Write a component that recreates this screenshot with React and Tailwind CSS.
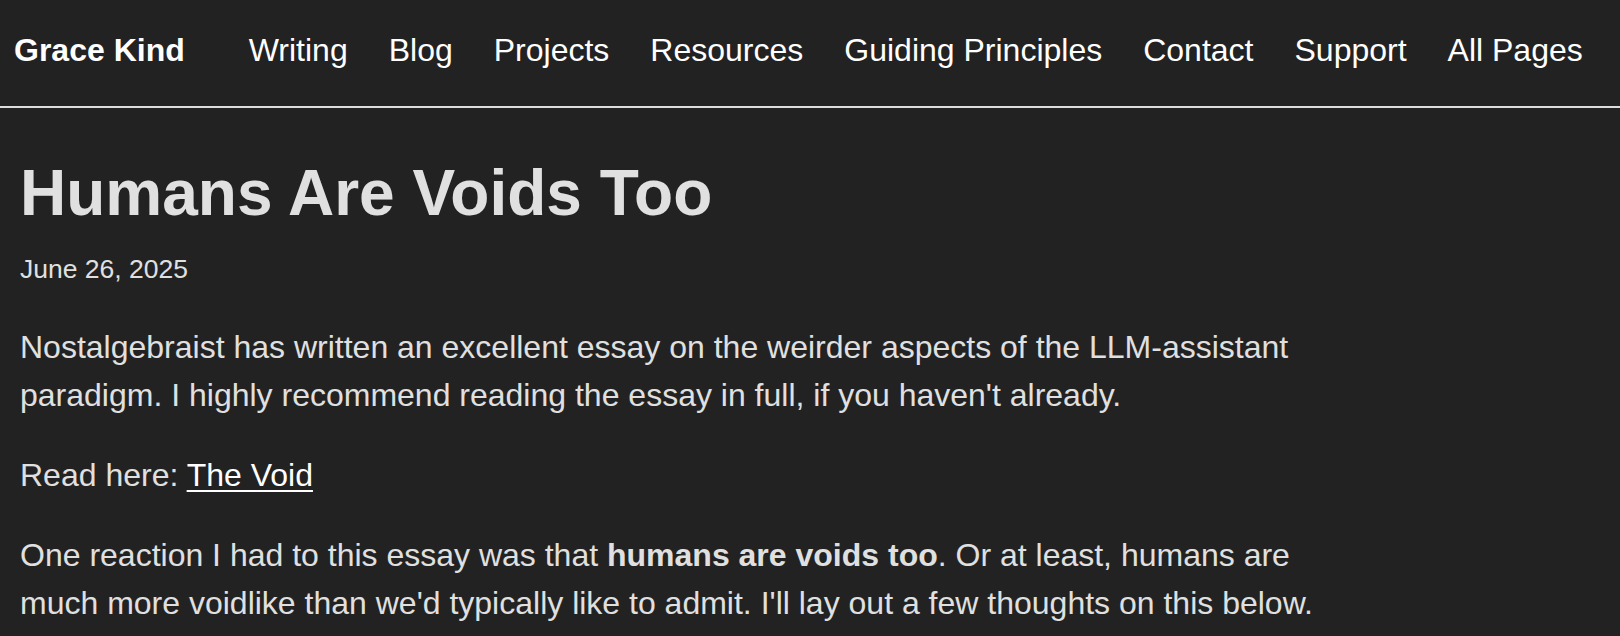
import React from 'react';

const navLinks = ['Writing', 'Blog', 'Projects', 'Resources', 'Guiding Principles', 'Contact', 'Support', 'All Pages'];

const App = () => {
  return (
    <div className="min-h-screen bg-[#222222] text-[#e0e0e0] font-['Liberation_Sans',Arial,sans-serif]">
      <nav className="flex items-center pl-[14px] pt-[26px] pb-[32px] border-b-2 border-[#dddddd] text-[32px] leading-[48px] text-white">
        <a href="#" className="font-bold">Grace Kind</a>
        <div className="flex gap-[41px] ml-[64px]">
          {navLinks.map((link) => (
            <a key={link} href="#">{link}</a>
          ))}
        </div>
      </nav>

      <main className="pl-[20px] w-[1350px]">
        <h1 className="mt-[47px] text-[64px] leading-[1.2] font-bold">Humans Are Voids Too</h1>
        <p className="mt-[17px] text-[26.5px] leading-[40px]">June 26, 2025</p>

        <div className="mt-[34px] text-[32px] leading-[48px] space-y-[32px]">
          <p>
            Nostalgebraist has written an excellent essay on the weirder aspects of the LLM-assistant paradigm. I highly recommend reading the essay in full, if you haven't already.
          </p>
          <p>
            Read here: <a href="#" className="text-white underline decoration-2 underline-offset-[4px]">The Void</a>
          </p>
          <p>
            One reaction I had to this essay was that <strong className="font-bold">humans are voids too</strong>. Or at least, humans are much more voidlike than we'd typically like to admit. I'll lay out a few thoughts on this below.
          </p>
        </div>
      </main>
    </div>
  );
};

export default App;
